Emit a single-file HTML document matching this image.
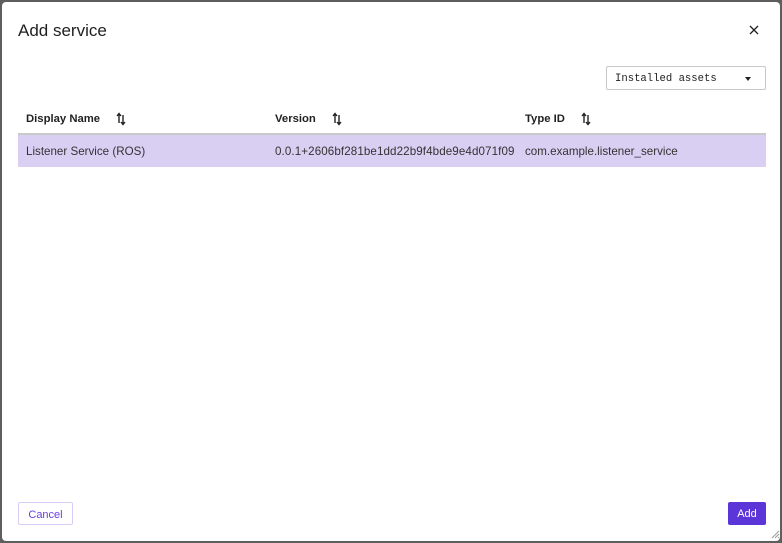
<!DOCTYPE html>
<html><head><meta charset="utf-8"><style>
*{box-sizing:border-box;margin:0;padding:0}
html,body{width:782px;height:543px;overflow:hidden;background:#5e5e5e;font-family:"Liberation Sans",sans-serif}
.dlg{position:absolute;left:2px;top:2px;width:778px;height:539px;background:#fff;border-radius:4px}
.title{position:absolute;left:16px;top:19px;font-size:17px;color:#1f1f1f}
.close{position:absolute;left:747px;top:23px}
.sel{position:absolute;left:604px;top:64px;width:160px;height:24px;border:1px solid #c8c8c8;border-radius:2px;font-family:"Liberation Mono",monospace;font-size:10.6px;color:#222;padding:6px 0 0 8px}
.sel .car{position:absolute;right:14px;top:10px;width:0;height:0;border-left:3.5px solid transparent;border-right:3.5px solid transparent;border-top:4px solid #222}
.hdr{position:absolute;left:16px;top:102px;width:748px;height:31px;border-bottom:2px solid #c9c9c9;font-size:11.3px;font-weight:bold;color:#222}
.row{position:absolute;left:16px;top:133px;width:748px;height:32px;background:#d9cff3;font-size:11.6px;color:#333}
.c{position:absolute;top:10px;white-space:nowrap}
.hdr .c{top:9px}
.s{position:absolute;top:8px}
.btn{position:absolute;top:500px;height:23px;font-size:11px;border-radius:2px;padding-top:6px;text-align:center}
.cancel{left:16px;width:55px;border:1px solid #d8ccf7;color:#6a3ee0}
.add{left:726px;width:38px;background:#5c35d8;color:#fff}
</style></head><body>
<div class="dlg">
<div class="title">Add service</div>
<svg class="close" width="10" height="10" viewBox="0 0 10 10"><path d="M1 1L9 9M9 1L1 9" stroke="#222" stroke-width="1.3"/></svg>
<div class="sel">Installed assets<span class="car"></span></div>
<div class="hdr">
<span class="c" style="left:8px">Display Name</span>
<svg class="s" style="left:98px" width="10" height="14" viewBox="0 0 10 14"><path d="M3 11V2M1 4L3 1.5 5 4M7 3v9M5 10l2 2.5 2-2.5" stroke="#222" stroke-width="1.4" fill="none"/></svg>
<span class="c" style="left:257px">Version</span>
<svg class="s" style="left:314px" width="10" height="14" viewBox="0 0 10 14"><path d="M3 11V2M1 4L3 1.5 5 4M7 3v9M5 10l2 2.5 2-2.5" stroke="#222" stroke-width="1.4" fill="none"/></svg>
<span class="c" style="left:507px">Type ID</span>
<svg class="s" style="left:563px" width="10" height="14" viewBox="0 0 10 14"><path d="M3 11V2M1 4L3 1.5 5 4M7 3v9M5 10l2 2.5 2-2.5" stroke="#222" stroke-width="1.4" fill="none"/></svg>
</div>
<div class="row">
<span class="c" style="left:8px">Listener Service (ROS)</span>
<span class="c" style="left:257px;letter-spacing:0.1px">0.0.1+2606bf281be1dd22b9f4bde9e4d071f09</span>
<span class="c" style="left:507px">com.example.listener_service</span>
</div>
<div class="btn cancel">Cancel</div>
<div class="btn add">Add</div>
<svg style="position:absolute;left:769px;top:528px" width="9" height="9" viewBox="0 0 9 9"><path d="M1 8L8 1M4 8L8 4M7 8L8 7" stroke="#999" stroke-width="1"/></svg>
</div>
</body></html>
